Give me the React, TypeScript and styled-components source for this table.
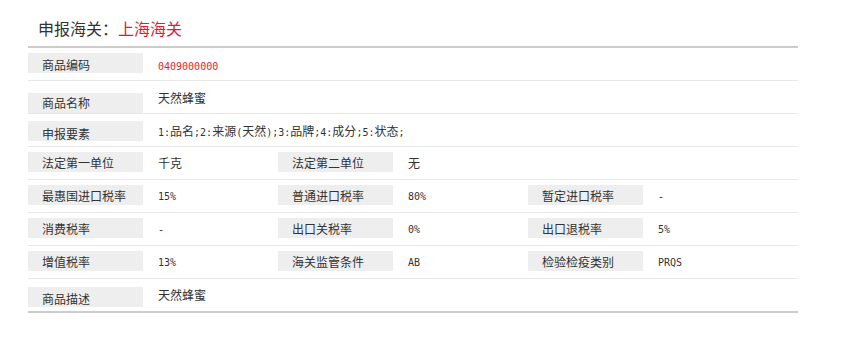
import React from 'react';
import styled, { createGlobalStyle } from 'styled-components';

const GlobalStyle = createGlobalStyle`
  html, body {
    margin: 0;
    padding: 0;
    background: #fff;
  }
  body {
    font-family: "Noto Sans CJK SC", "Noto Sans", sans-serif;
    font-size: 12px;
    color: #333;
  }
`;

const Panel = styled.section`
  width: 770px;
  margin-left: 28px;
  border-bottom: 2px solid #ccc;
`;

const Title = styled.h2`
  margin: 0;
  padding: 20px 0 10px 10px;
  font-size: 16px;
  line-height: 16px;
  font-weight: normal;
  color: #333;
  border-bottom: 2px solid #ccc;
`;

const Accent = styled.span`
  color: #d81e3c;
`;

const Row = styled.div<{ $last?: boolean }>`
  display: flex;
  align-items: flex-start;
  height: 32px;
  border-bottom: ${(p) => (p.$last ? 'none' : '1px solid #e8e8e8')};
`;

const Cell = styled.div<{ $wide?: boolean }>`
  display: flex;
  align-items: flex-start;
  flex: ${(p) => (p.$wide ? '1 1 auto' : '0 0 250px')};
`;

const Label = styled.div<{ $top: number; $pad: number }>`
  flex: 0 0 115px;
  box-sizing: border-box;
  height: 20px;
  margin-top: ${(p) => p.$top}px;
  padding: ${(p) => p.$pad}px 0 0 14px;
  background: #eee;
  line-height: 12px;
  white-space: nowrap;
  color: #333;
`;

const Value = styled.div<{ $top: number; $red?: boolean }>`
  margin: ${(p) => p.$top}px 0 0 15px;
  line-height: 12px;
  white-space: nowrap;
  color: ${(p) => (p.$red ? '#d81e3c' : '#333')};
`;

/* half-width characters are set narrower than the ideographs */
const Latin = styled.span`
  font-family: "DejaVu Sans Mono", "Liberation Mono", monospace;
  font-size: 10px;
`;

const Mixed = ({ text }: { text: string }) => (
  <>
    {text.split(/([\x20-\x7e]+)/).map((part, i) =>
      part === '' ? null : /^[\x20-\x7e]+$/.test(part) ? (
        <Latin key={i}>{part}</Latin>
      ) : (
        <React.Fragment key={i}>{part}</React.Fragment>
      )
    )}
  </>
);

type Field = { label: string; value: string; red?: boolean };
type RowSpec = { box: number; pad: number; val: number; fields: Field[] };

const rows: RowSpec[] = [
  { box: 5, pad: 6, val: 11, fields: [{ label: '商品编码', value: '0409000000', red: true }] },
  { box: 12, pad: 4, val: 11, fields: [{ label: '商品名称', value: '天然蜂蜜' }] },
  {
    box: 7,
    pad: 7,
    val: 11,
    fields: [{ label: '申报要素', value: '1:品名;2:来源(天然);3:品牌;4:成分;5:状态;' }],
  },
  {
    box: 5,
    pad: 5,
    val: 10,
    fields: [
      { label: '法定第一单位', value: '千克' },
      { label: '法定第二单位', value: '无' },
    ],
  },
  {
    box: 5,
    pad: 5,
    val: 9,
    fields: [
      { label: '最惠国进口税率', value: '15%' },
      { label: '普通进口税率', value: '80%' },
      { label: '暂定进口税率', value: '-' },
    ],
  },
  {
    box: 5,
    pad: 5,
    val: 9,
    fields: [
      { label: '消费税率', value: '-' },
      { label: '出口关税率', value: '0%' },
      { label: '出口退税率', value: '5%' },
    ],
  },
  {
    box: 5,
    pad: 5,
    val: 9,
    fields: [
      { label: '增值税率', value: '13%' },
      { label: '海关监管条件', value: 'AB' },
      { label: '检验检疫类别', value: 'PRQS' },
    ],
  },
  { box: 8, pad: 6, val: 10, fields: [{ label: '商品描述', value: '天然蜂蜜' }] },
];

export default function App() {
  return (
    <>
      <GlobalStyle />
      <Panel>
        <Title>
          申报海关：<Accent>上海海关</Accent>
        </Title>
        {rows.map((row, r) => (
          <Row key={r} $last={r === rows.length - 1}>
            {row.fields.map((f) => (
              <Cell key={f.label} $wide={row.fields.length === 1}>
                <Label $top={row.box} $pad={row.pad}>
                  {f.label}
                </Label>
                <Value $top={row.val} $red={f.red}>
                  <Mixed text={f.value} />
                </Value>
              </Cell>
            ))}
          </Row>
        ))}
      </Panel>
    </>
  );
}
